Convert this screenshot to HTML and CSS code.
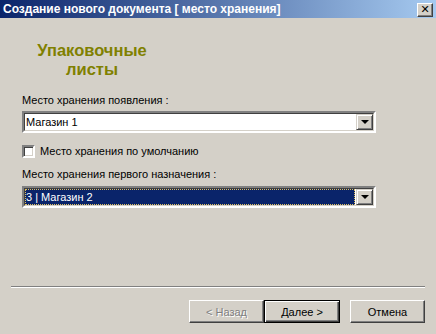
FILE: index.html
```html
<!DOCTYPE html>
<html lang="ru">
<head>
  <meta charset="UTF-8" />
  <title>Создание нового документа</title>
  <link rel="stylesheet" href="styles.css">
</head>
<body>
  <div class="window">

    <!-- Заголовок окна -->
    <div class="titlebar">
      <span class="title">Создание нового документа [ место хранения]</span>
      <button class="close-btn">&#x2715;</button>
    </div>

    <div class="content">
      <h1 class="heading">Упаковочные<br>листы</h1>

      <label class="field-label">Место хранения появления :</label>
      <div class="combo">
        <div class="combo-value">Магазин 1</div>
        <div class="combo-arrow"><span class="tri"></span></div>
      </div>

      <label class="check-row">
        <span class="checkbox"></span>
        <span>Место хранения по умолчанию</span>
      </label>

      <label class="field-label second">Место хранения первого назначения :</label>
      <div class="combo">
        <div class="combo-value selected"><span class="focus">3 | Магазин 2</span></div>
        <div class="combo-arrow"><span class="tri"></span></div>
      </div>
    </div>

    <div class="separator"></div>

    <div class="buttons">
      <button class="btn disabled">&lt; Назад</button>
      <button class="btn default">Далее &gt;</button>
      <button class="btn cancel">Отмена</button>
    </div>
  </div>
</body>
</html>
```

FILE: styles.css
```css
:root {
  --face: #d4d0c8;
  --shadow: #808080;
  --dark: #404040;
  --navy: #0a246a;
}
html, body {
  margin: 0; padding: 0;
  background: var(--face);
  font-family: 'Liberation Sans', Arial, sans-serif;
  font-size: 11px;
  color: #000;
}
.window {
  width: 436px;
  height: 334px;
  display: flex;
  flex-direction: column;
}
.titlebar {
  height: 18px;
  background: linear-gradient(to right, var(--navy), #a6caf0);
  display: flex;
  align-items: center;
  justify-content: space-between;
  padding: 0 3px 0 3px;
}
.title {
  color: #fff;
  font-weight: bold;
  font-size: 12px;
}
.close-btn {
  width: 16px;
  height: 14px;
  padding: 0;
  margin-top: 1px;
  background: var(--face);
  border: 1px solid;
  border-color: #fff var(--dark) var(--dark) #fff;
  box-shadow: inset -1px -1px 0 var(--shadow);
  font-size: 11px;
  font-weight: bold;
  line-height: 11px;
  color: #000;
  font-family: 'DejaVu Sans', sans-serif;
}
.content {
  padding: 0 60px 0 22px;
  display: flex;
  flex-direction: column;
}
.heading {
  margin: 23px 0 0 0;
  width: 140px;
  text-align: center;
  color: #808000;
  font-size: 16.5px;
  font-weight: bold;
  line-height: 19px;
}
.field-label {
  margin-top: 15px;
  line-height: 13px;
}
.field-label.second {
  margin-top: 10px;
}
.combo {
  margin-top: 4px;
  height: 18px;
  display: flex;
  border: 2px solid;
  border-color: var(--shadow) #fff #fff var(--shadow);
  position: relative;
  background: #fff;
}
.field-label.second + .combo {
  margin-top: 5px;
}
.combo::before {
  content: '';
  position: absolute;
  inset: 0;
  border: 1px solid;
  border-color: var(--dark) var(--face) var(--face) var(--dark);
  pointer-events: none;
}
.combo-value {
  flex: 1;
  padding: 1px 1px 1px 2px;
  line-height: 16px;
  display: flex;
}
.combo-value.selected {
  padding: 1px;
}
.focus {
  flex: 1;
  background: var(--navy);
  color: #fff;
  outline: 1px dotted #e0c060;
  outline-offset: -1px;
  padding-left: 1px;
  line-height: 16px;
}
.combo-arrow {
  width: 17px;
  margin: 1px 1px 1px 0;
  background: var(--face);
  box-sizing: border-box;
  border: 1px solid;
  border-color: var(--face) var(--dark) var(--dark) var(--face);
  box-shadow: inset 1px 1px 0 #fff, inset -1px -1px 0 var(--shadow);
  display: flex;
  align-items: center;
  justify-content: center;
}
.tri {
  width: 0; height: 0;
  border-left: 4px solid transparent;
  border-right: 4px solid transparent;
  border-top: 4px solid #000;
  margin-left: 1px;
}
.check-row {
  margin-top: 12px;
  display: flex;
  align-items: center;
  gap: 5px;
  line-height: 13px;
}
.checkbox {
  width: 9px;
  height: 9px;
  background: #fff;
  border: 2px solid;
  border-color: var(--shadow) #fff #fff var(--shadow);
  box-shadow: inset 1px 1px 0 var(--dark), inset -1px -1px 0 var(--face);
}
.separator {
  margin: auto 11px 0 11px;
  height: 1px;
  background: var(--shadow);
  border-bottom: 1px solid #fff;
}
.buttons {
  display: flex;
  justify-content: flex-end;
  padding: 12px 11px 11px 0;
}
.btn {
  width: 75px;
  height: 23px;
  font-family: 'Liberation Sans', Arial, sans-serif;
  font-size: 11px;
  background: var(--face);
  border: 1px solid;
  border-color: #fff var(--dark) var(--dark) #fff;
  box-shadow: inset -1px -1px 0 var(--shadow);
  color: #000;
  padding: 0;
}
.btn.disabled {
  color: var(--shadow);
  text-shadow: 1px 1px 0 #fff;
}
.btn.default {
  border: 1px solid #000;
  box-shadow: inset 1px 1px 0 #fff, inset -1px -1px 0 var(--dark), inset -2px -2px 0 var(--shadow);
  width: 76px;
}
.btn.cancel {
  margin-left: 10px;
}
```
